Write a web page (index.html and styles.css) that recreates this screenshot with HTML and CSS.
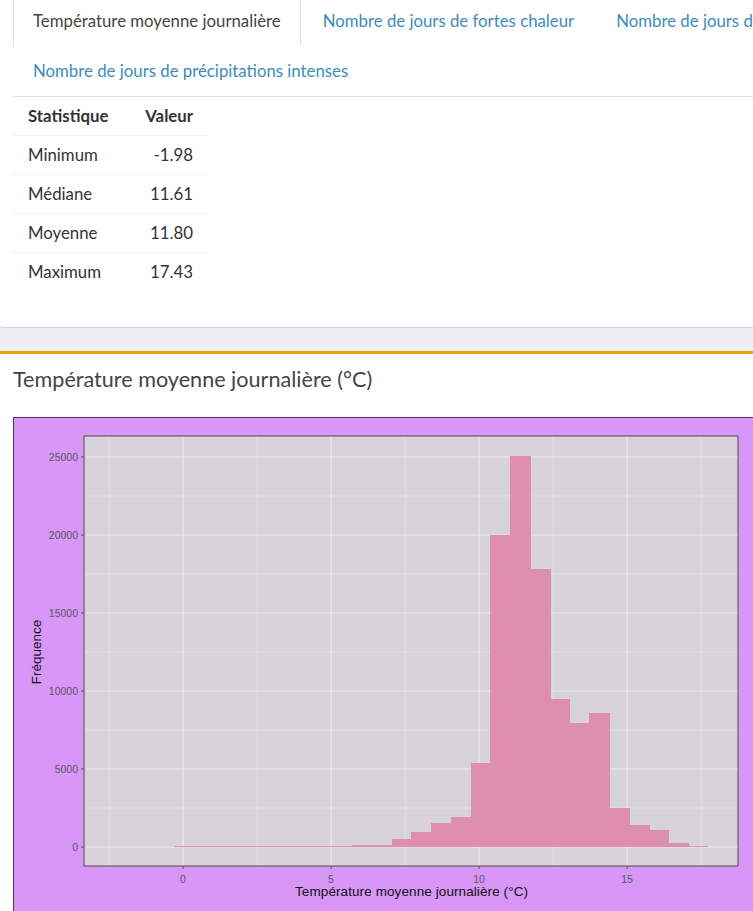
FILE: index.html
```html
<!DOCTYPE html>
<html lang="fr">

<head>
    <meta charset="UTF-8">
    <meta name="viewport" content="width=device-width, initial-scale=1.0">
    <title>Température moyenne journalière</title>
    <link rel="stylesheet" href="styles.css">
</head>

<body>
    <div class="page">
        <!-- Tabbed box with the summary table -->
        <div class="card">
            <ul class="tabs">
                <li class="tab active">Température moyenne journalière</li>
                <li class="tab">Nombre de jours de fortes chaleur</li>
                <li class="tab">Nombre de jours de gel</li>
                <li class="tab">Nombre de jours de précipitations intenses</li>
            </ul>
            <table class="stats">
                <thead>
                    <tr><th>Statistique</th><th class="num">Valeur</th></tr>
                </thead>
                <tbody>
                    <tr><td>Minimum</td><td class="num">-1.98</td></tr>
                    <tr><td>Médiane</td><td class="num">11.61</td></tr>
                    <tr><td>Moyenne</td><td class="num">11.80</td></tr>
                    <tr><td>Maximum</td><td class="num">17.43</td></tr>
                </tbody>
            </table>
        </div>

        <!-- Histogram box -->
        <div class="box">
            <h3 class="box-title">Température moyenne journalière (°C)</h3>
            <div class="box-body">
                <svg class="plot" width="750" height="500" viewBox="0 0 750 500">
                    <rect x="0" y="0" width="750" height="500" fill="#d896f7"/>
                    <rect x="0.5" y="0.5" width="760" height="510" fill="none" stroke="#45394f"/>
                    <rect x="71" y="19" width="654" height="430" fill="#d8d3db"/>

                    <!-- minor grid -->
                    <g stroke="#e2dee4" stroke-width="1">
                        <line x1="96" y1="19" x2="96" y2="449"/>
                        <line x1="244" y1="19" x2="244" y2="449"/>
                        <line x1="392" y1="19" x2="392" y2="449"/>
                        <line x1="540" y1="19" x2="540" y2="449"/>
                        <line x1="688" y1="19" x2="688" y2="449"/>
                        <line x1="71" y1="79" x2="725" y2="79"/>
                        <line x1="71" y1="157" x2="725" y2="157"/>
                        <line x1="71" y1="235" x2="725" y2="235"/>
                        <line x1="71" y1="313" x2="725" y2="313"/>
                        <line x1="71" y1="391" x2="725" y2="391"/>
                    </g>
                    <!-- major grid -->
                    <g stroke="#ecebee" stroke-width="1.2">
                        <line x1="170" y1="19" x2="170" y2="449"/>
                        <line x1="318" y1="19" x2="318" y2="449"/>
                        <line x1="466" y1="19" x2="466" y2="449"/>
                        <line x1="614" y1="19" x2="614" y2="449"/>
                        <line x1="71" y1="40" x2="725" y2="40"/>
                        <line x1="71" y1="118" x2="725" y2="118"/>
                        <line x1="71" y1="196" x2="725" y2="196"/>
                        <line x1="71" y1="274" x2="725" y2="274"/>
                        <line x1="71" y1="352" x2="725" y2="352"/>
                        <line x1="71" y1="430" x2="725" y2="430"/>
                    </g>

                    <!-- bars -->
                    <g fill="#de8eae" shape-rendering="crispEdges">
                        <rect x="161" y="429" width="99" height="1"/>
                        <rect x="260" y="429" width="79" height="1"/>
                        <rect x="339" y="428" width="40" height="2"/>
                        <rect x="379" y="422" width="20" height="8"/>
                        <rect x="398" y="415" width="21" height="15"/>
                        <rect x="418" y="406" width="21" height="24"/>
                        <rect x="438" y="400" width="21" height="30"/>
                        <rect x="458" y="346" width="20" height="84"/>
                        <rect x="477" y="118" width="21" height="312"/>
                        <rect x="497" y="39" width="21" height="391"/>
                        <rect x="517" y="152" width="21" height="278"/>
                        <rect x="537" y="282" width="20" height="148"/>
                        <rect x="557" y="306" width="20" height="124"/>
                        <rect x="576" y="296" width="21" height="134"/>
                        <rect x="596" y="391" width="21" height="39"/>
                        <rect x="616" y="408" width="21" height="22"/>
                        <rect x="636" y="413" width="20" height="17"/>
                        <rect x="656" y="426" width="20" height="4"/>
                        <rect x="676" y="429" width="19" height="1"/>
                    </g>

                    <rect x="71" y="19" width="654" height="430" fill="none" stroke="#4a4a4a"/>

                    <!-- ticks -->
                    <g stroke="#5a5a5a">
                        <line x1="68" y1="40" x2="71" y2="40"/>
                        <line x1="68" y1="118" x2="71" y2="118"/>
                        <line x1="68" y1="196" x2="71" y2="196"/>
                        <line x1="68" y1="274" x2="71" y2="274"/>
                        <line x1="68" y1="352" x2="71" y2="352"/>
                        <line x1="68" y1="430" x2="71" y2="430"/>
                        <line x1="170" y1="449" x2="170" y2="452"/>
                        <line x1="318" y1="449" x2="318" y2="452"/>
                        <line x1="466" y1="449" x2="466" y2="452"/>
                        <line x1="614" y1="449" x2="614" y2="452"/>
                    </g>

                    <g class="tick-label" text-anchor="end">
                        <text x="65" y="44">25000</text>
                        <text x="65" y="122">20000</text>
                        <text x="65" y="200">15000</text>
                        <text x="65" y="278">10000</text>
                        <text x="65" y="356">5000</text>
                        <text x="65" y="434">0</text>
                    </g>
                    <g class="tick-label" text-anchor="middle">
                        <text x="170" y="466">0</text>
                        <text x="318" y="466">5</text>
                        <text x="466" y="466">10</text>
                        <text x="614" y="466">15</text>
                    </g>

                    <text class="axis-title" x="282" y="479" textLength="233">Température moyenne journalière (°C)</text>
                    <text class="axis-title" x="0" y="0" text-anchor="middle" transform="translate(28 235) rotate(-90)">Fréquence</text>
                </svg>
            </div>
        </div>
    </div>
</body>

</html>
```

FILE: styles.css
```css
/* Page */
html,
body {
    margin: 0;
    overflow: hidden;
}

body {
    background-color: #ecf0f5;
    font-family: Lato, "Open Sans", sans-serif;
    font-size: 16.8px;
    color: #333;
}

.page {
    width: 1000px;
}

/* Top box with tabs */
.card {
    background-color: #fff;
    border-radius: 0 0 3px 3px;
    box-shadow: 0 1px 1px rgba(0, 0, 0, 0.12);
    padding: 0 0 36px 13px;
    margin-bottom: 24px;
}

.tabs {
    display: flex;
    flex-wrap: wrap;
    list-style: none;
    margin: -4px 0 0;
    padding: 0;
    border-bottom: 1px solid #ddd;
}

.tab {
    padding: 12px 19px;
    line-height: 24px;
    border: 1px solid transparent;
    margin-right: 2px;
    color: #3c8dbc;
    white-space: nowrap;
}

.tab.active {
    color: #444;
    border-left-color: #ddd;
    border-right-color: #ddd;
}

/* Summary table */
.stats {
    border-collapse: collapse;
    width: 195px;
}

.stats th,
.stats td {
    padding: 0 15px;
    height: 38px;
    line-height: 24px;
    border-bottom: 1px solid #f2f2f2;
    text-align: left;
}

.stats tbody tr:last-child td {
    border-bottom: none;
}

.stats th {
    font-weight: bold;
}

.stats .num {
    text-align: right;
}

/* Histogram box */
.box {
    background-color: #fff;
    border-top: 3px solid #f39c12;
}

.box-title {
    margin: 0;
    padding: 14px 13px 13px;
    font-size: 21.6px;
    line-height: 22px;
    font-weight: normal;
    color: #444;
}

.box-body {
    padding: 14px 13px 0;
}

.plot {
    display: block;
}

.tick-label {
    font-family: "Liberation Sans", Arial, sans-serif;
    font-size: 10.5px;
    fill: #5c5563;
}

.axis-title {
    font-family: "Liberation Sans", Arial, sans-serif;
    font-size: 13.5px;
    fill: #111;
}
```
